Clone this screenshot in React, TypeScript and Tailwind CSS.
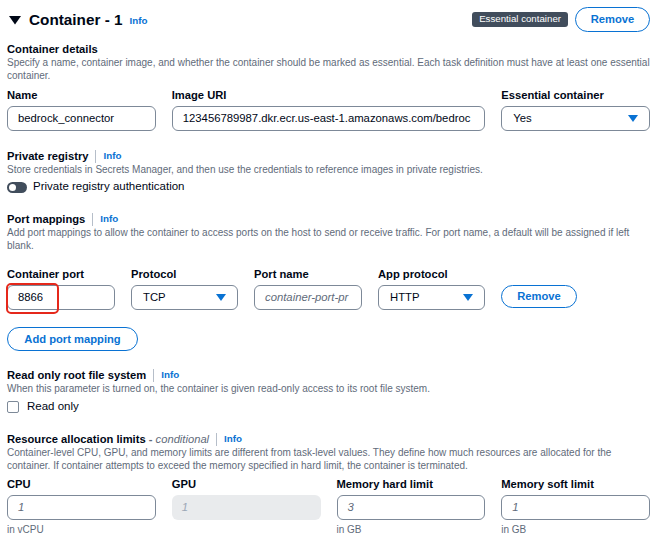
import React from "react";

const Info = ({ className = "" }: { className?: string }) => (
  <span className={"text-[9.8px] font-bold text-[#0972d3] " + className}>Info</span>
);

const SectionTitle = ({ title, extra }: { title: string; extra?: React.ReactNode }) => (
  <div className="flex items-center h-[14px] leading-[14px]">
    <span className="text-[11.2px] font-bold">{title}</span>
    {extra}
    <span className="mx-[7px] w-px h-[13px] bg-[#b6bec9]" />
    <Info />
  </div>
);

const Desc = ({ lines }: { lines: string[] }) => (
  <div className="text-[10px] leading-[13px] text-[#5f6b7a]">
    {lines.map((l, i) => (
      <div key={i} className="whitespace-nowrap">
        {l}
      </div>
    ))}
  </div>
);

const Label = ({ children }: { children: React.ReactNode }) => (
  <div className="text-[11.2px] font-bold leading-[14px] h-[14px] whitespace-nowrap">{children}</div>
);

const Input = ({
  value,
  placeholder,
  disabled,
}: {
  value?: string;
  placeholder?: string;
  disabled?: boolean;
}) => (
  <div
    className={
      "h-[25px] rounded-[6px] px-[10px] flex items-center text-[11.3px] overflow-hidden whitespace-nowrap " +
      (disabled ? "bg-[#e9ebed]" : "border border-[#7d8998] bg-white")
    }
  >
    {value ? (
      <span>{value}</span>
    ) : (
      <span className={"italic " + (disabled ? "text-[#9ba7b6]" : "text-[#5f6b7a]")}>{placeholder}</span>
    )}
  </div>
);

const Caret = () => (
  <svg width="10" height="7" viewBox="0 0 10 7">
    <path d="M0 0 H10 L5 7 Z" fill="#0972d3" />
  </svg>
);

const Select = ({ value }: { value: string }) => (
  <div className="h-[25px] rounded-[6px] border border-[#7d8998] bg-white pl-[11px] pr-[11px] flex items-center justify-between text-[11.3px]">
    <span>{value}</span>
    <Caret />
  </div>
);

const OutlineButton = ({ children, className = "" }: { children: React.ReactNode; className?: string }) => (
  <div
    className={
      "rounded-full border-[1.5px] border-[#0972d3] text-[#0972d3] font-bold text-[11.2px] flex items-center justify-center " +
      className
    }
  >
    {children}
  </div>
);

const Helper = ({ children }: { children: React.ReactNode }) => (
  <div className="mt-[4px] text-[10px] leading-[12px] text-[#5f6b7a]">{children}</div>
);

export default function App() {
  return (
    <div
      className="w-[660px] h-[554px] overflow-hidden bg-white pl-[7px] pr-[10px] pt-[7px] text-[#000716]"
      style={{ fontFamily: "'Liberation Sans', Arial, sans-serif" }}
    >
      {/* Header */}
      <div className="flex items-center justify-between h-[25px]">
        <div className="flex items-center">
          <svg width="12" height="9" viewBox="0 0 12 9" className="ml-[2px] mt-[1px]">
            <path d="M0 0 H12 L6 8.5 Z" fill="#000716" />
          </svg>
          <span className="ml-[8px] text-[15.3px] font-bold leading-[20px]">Container - 1</span>
          <span className="ml-[7px] mt-[4px] text-[9.8px] font-bold text-[#0972d3]">Info</span>
        </div>
        <div className="flex items-center">
          <div className="h-[15px] px-[7px] rounded-[3px] bg-[#414d5c] text-white text-[9.7px] flex items-center">
            Essential container
          </div>
          <OutlineButton className="ml-[7px] w-[75px] h-[25px]">Remove</OutlineButton>
        </div>
      </div>

      {/* Container details */}
      <div className="mt-[10px] text-[11.2px] font-bold leading-[14px]">Container details</div>
      <Desc
        lines={[
          "Specify a name, container image, and whether the container should be marked as essential. Each task definition must have at least one essential",
          "container.",
        ]}
      />
      <div className="mt-[6px] grid grid-cols-4 gap-x-[16px]">
        <div>
          <Label>Name</Label>
          <div className="mt-[4px]">
            <Input value="bedrock_connector" />
          </div>
        </div>
        <div className="col-span-2">
          <Label>Image URI</Label>
          <div className="mt-[4px]">
            <Input value="123456789987.dkr.ecr.us-east-1.amazonaws.com/bedroc" />
          </div>
        </div>
        <div>
          <Label>Essential container</Label>
          <div className="mt-[4px]">
            <Select value="Yes" />
          </div>
        </div>
      </div>

      {/* Private registry */}
      <div className="mt-[18px]">
        <SectionTitle title="Private registry" />
      </div>
      <Desc
        lines={[
          "Store credentials in Secrets Manager, and then use the credentials to reference images in private registries.",
        ]}
      />
      <div className="mt-[3px] flex items-center h-[16px]">
        <div className="w-[20px] h-[11px] rounded-full bg-[#414d5c] relative">
          <div className="absolute left-[2px] top-[2px] w-[7px] h-[7px] rounded-full bg-white" />
        </div>
        <span className="ml-[6px] text-[11.5px]">Private registry authentication</span>
      </div>

      {/* Port mappings */}
      <div className="mt-[17px]">
        <SectionTitle title="Port mappings" />
      </div>
      <Desc
        lines={[
          "Add port mappings to allow the container to access ports on the host to send or receive traffic. For port name, a default will be assigned if left",
          "blank.",
        ]}
      />
      <div className="mt-[15px] grid grid-cols-[108px_107px_108px_107px_auto] gap-x-[16px]">
        <div>
          <Label>Container port</Label>
          <div className="mt-[4px] relative">
            <Input value="8866" />
            <div className="absolute left-[-1px] top-[-2px] w-[53px] h-[31px] border-2 border-[#e5281b] rounded-[5px]" />
          </div>
        </div>
        <div>
          <Label>Protocol</Label>
          <div className="mt-[4px]">
            <Select value="TCP" />
          </div>
        </div>
        <div>
          <Label>Port name</Label>
          <div className="mt-[4px]">
            <Input placeholder="container-port-pr" />
          </div>
        </div>
        <div>
          <Label>App protocol</Label>
          <div className="mt-[4px]">
            <Select value="HTTP" />
          </div>
        </div>
        <div className="pt-[18px]">
          <OutlineButton className="w-[76px] h-[23px]">Remove</OutlineButton>
        </div>
      </div>
      <div className="mt-[17px] flex">
        <OutlineButton className="w-[131px] h-[24px]">Add port mapping</OutlineButton>
      </div>

      {/* Read only */}
      <div className="mt-[17px]">
        <SectionTitle title="Read only root file system" />
      </div>
      <Desc lines={["When this parameter is turned on, the container is given read-only access to its root file system."]} />
      <div className="mt-[4px] flex items-center h-[16px]">
        <div className="w-[12px] h-[12px] border-[1.5px] border-[#7d8998] rounded-[2px] bg-white" />
        <span className="ml-[8px] text-[11.5px]">Read only</span>
      </div>

      {/* Resource allocation */}
      <div className="mt-[17px]">
        <SectionTitle
          title="Resource allocation limits"
          extra={
            <span className="text-[11.2px] text-[#5f6b7a] whitespace-pre">
              <span className="font-bold"> - </span>
              <span className="italic">conditional</span>
            </span>
          }
        />
      </div>
      <Desc
        lines={[
          "Container-level CPU, GPU, and memory limits are different from task-level values. They define how much resources are allocated for the",
          "container. If container attempts to exceed the memory specified in hard limit, the container is terminated.",
        ]}
      />
      <div className="mt-[5px] grid grid-cols-4 gap-x-[16px]">
        <div>
          <Label>CPU</Label>
          <div className="mt-[4px]">
            <Input placeholder="1" />
          </div>
          <Helper>in vCPU</Helper>
        </div>
        <div>
          <Label>GPU</Label>
          <div className="mt-[4px]">
            <Input placeholder="1" disabled />
          </div>
        </div>
        <div>
          <Label>Memory hard limit</Label>
          <div className="mt-[4px]">
            <Input placeholder="3" />
          </div>
          <Helper>in GB</Helper>
        </div>
        <div>
          <Label>Memory soft limit</Label>
          <div className="mt-[4px]">
            <Input placeholder="1" />
          </div>
          <Helper>in GB</Helper>
        </div>
      </div>
    </div>
  );
}
